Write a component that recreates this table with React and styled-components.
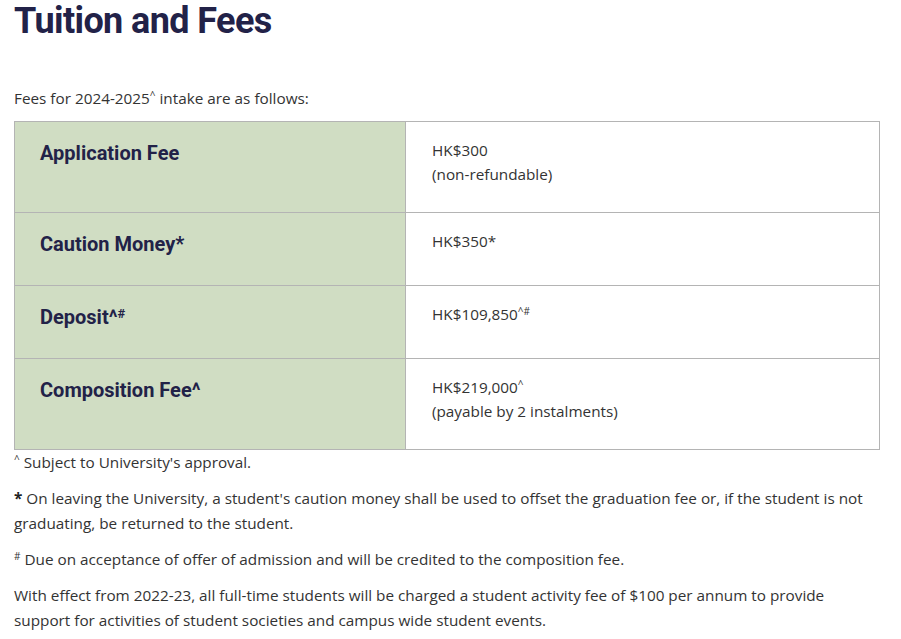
import React from 'react';
import styled, {createGlobalStyle} from "styled-components";

const COLOR = {
    NAVY: "#222248",
    TEXT: "#333333",
    GREEN: "#d0ddc3",
    BORDER: "#b4b4b4"
};

function App() {

    const fees = [
        {label: <>Application Fee</>, lines: [<>HK$300</>, <>(non-refundable)</>]},
        {label: <>Caution Money*</>, lines: [<>HK$350*</>]},
        {label: <>Deposit^<LabelSup>#</LabelSup></>, lines: [<>HK$109,850<Sup>^#</Sup></>]},
        {label: <>Composition Fee^</>, lines: [<>HK$219,000<Sup>^</Sup></>, <>(payable by 2 instalments)</>]}
    ];

    return (
        <Page>
            <GlobalStyle/>
            <Title>Tuition and Fees</Title>
            <Intro>Fees for 2024-2025<Sup>^</Sup> intake are as follows:</Intro>
            <FeeTable>
                <tbody>
                {fees.map((fee, idx) => (
                    <tr key={idx}>
                        <LabelCell>{fee.label}</LabelCell>
                        <ValueCell>
                            {fee.lines.map((line, i) => <div key={i}>{line}</div>)}
                        </ValueCell>
                    </tr>
                ))}
                </tbody>
            </FeeTable>
            <Note><Sup>^</Sup> Subject to University's approval.</Note>
            <Note>
                <Mark>* </Mark>On leaving the University, a student's caution money shall be used to offset the
                graduation fee or, if the student is not graduating, be returned to the student.
            </Note>
            <Note><Sup>#</Sup> Due on acceptance of offer of admission and will be credited to the composition fee.</Note>
            <Note>
                With effect from 2022-23, all full-time students will be charged a student activity fee of $100
                per annum to provide support for activities of student societies and campus wide student events.
            </Note>
        </Page>
    );
}

const GlobalStyle = createGlobalStyle`
  body {
    margin: 0;
    background: #ffffff;
    font-family: "Open Sans", Lato, sans-serif;
  }
`

const Page = styled.div`
  width: 866px;
  padding: 0 14px;
  color: ${COLOR.TEXT};
  font-size: 15.3px;
`

const Title = styled.h1`
  margin: 2px 0 0;
  font-family: Roboto, "Open Sans", sans-serif;
  font-weight: 700;
  font-size: 36px;
  letter-spacing: -0.6px;
  line-height: 38px;
  color: ${COLOR.NAVY};
`

const Intro = styled.p`
  margin: 46px 0 10px;
  line-height: 25px;
`

const Sup = styled.sup`
  font-size: 10px;
  line-height: 0;
  vertical-align: 5px;
`

const LabelSup = styled.sup`
  font-size: 13px;
  line-height: 0;
  vertical-align: 6px;
`

const Mark = styled.b`
  font-weight: 700;
  color: #222222;
`

const FeeTable = styled.table`
  width: 100%;
  border-collapse: collapse;
  border: 1px solid ${COLOR.BORDER};

  td {
    border: 1px solid ${COLOR.BORDER};
    vertical-align: top;
  }
`

const LabelCell = styled.td`
  width: 340px;
  background-color: ${COLOR.GREEN};
  padding: 16px 25px 26px;
  font-family: Roboto, "Open Sans", sans-serif;
  font-weight: 700;
  font-size: 20px;
  line-height: 30px;
  color: ${COLOR.NAVY};
`

const ValueCell = styled.td`
  padding: 16px 26px 26px;
  line-height: 24px;
`

const Note = styled.p`
  margin: 0 0 11px;
  line-height: 25px;
`

export default App;
